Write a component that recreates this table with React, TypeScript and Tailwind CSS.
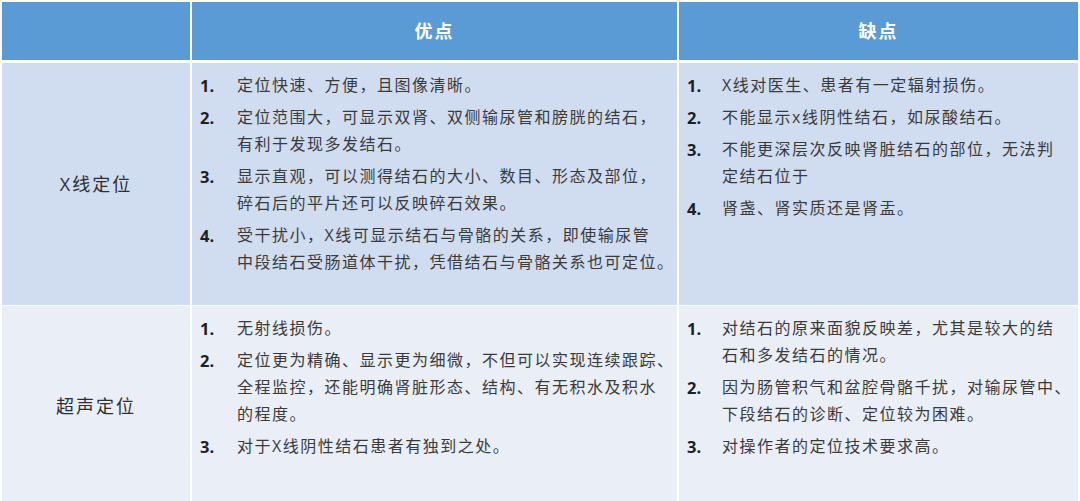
const font = { fontFamily: '"Open Sans", "Noto Sans CJK SC", sans-serif' };

type Row = { label: string; pros: string[][]; cons: string[][]; bg: string; h: string };

// Each item is split into the lines the slide wraps it into.
const rows: Row[] = [
  {
    label: 'X线定位',
    bg: 'bg-[#d0dcef]',
    h: 'h-[242px] mb-[1px]',
    pros: [
      ['定位快速、方便，且图像清晰。'],
      ['定位范围大，可显示双肾、双侧输尿管和膀胱的结石，', '有利于发现多发结石。'],
      ['显示直观，可以测得结石的大小、数目、形态及部位，', '碎石后的平片还可以反映碎石效果。'],
      ['受干扰小，X线可显示结石与骨骼的关系，即使输尿管', '中段结石受肠道体干扰，凭借结石与骨骼关系也可定位。'],
    ],
    cons: [
      ['X线对医生、患者有一定辐射损伤。'],
      ['不能显示x线阴性结石，如尿酸结石。'],
      ['不能更深层次反映肾脏结石的部位，无法判', '定结石位于'],
      ['肾盏、肾实质还是肾盂。'],
    ],
  },
  {
    label: '超声定位',
    bg: 'bg-[#e9eef7]',
    h: 'h-[200px]',
    pros: [
      ['无射线损伤。'],
      ['定位更为精确、显示更为细微，不但可以实现连续跟踪、', '全程监控，还能明确肾脏形态、结构、有无积水及积水', '的程度。'],
      ['对于X线阴性结石患者有独到之处。'],
    ],
    cons: [
      ['对结石的原来面貌反映差，尤其是较大的结', '石和多发结石的情况。'],
      ['因为肠管积气和盆腔骨骼千扰，对输尿管中、', '下段结石的诊断、定位较为困难。'],
      ['对操作者的定位技术要求高。'],
    ],
  },
];

function List({ items, numW }: { items: string[][]; numW: string }) {
  return (
    <ol className="flex flex-col gap-[5px] pt-[9px] pl-[8px]">
      {items.map((lines, i) => (
        <li key={i} className="flex text-[16px] leading-[27px] text-[#3b3b3b]">
          <span className={`${numW} shrink-0 font-bold text-[#1f1f1f] text-[16.5px]`}>{i + 1}.</span>
          <span className="flex-1 tracking-[1.5px]">
            {lines.map((l, j) => (
              <span key={j} className="block whitespace-nowrap">
                {l}
              </span>
            ))}
          </span>
        </li>
      ))}
    </ol>
  );
}

export default function App() {
  return (
    <div className="w-[1080px] h-[501px] bg-white pt-[2px] pl-[2px] pr-[2px] overflow-hidden" style={font}>
      <div className="grid grid-cols-[188px_485px_1fr] gap-x-[2px] h-[58px] mb-[3px]">
        <div className="bg-[#5b9bd5]" />
        <div className="bg-[#5b9bd5] flex items-center justify-center text-white font-bold text-[18px] tracking-[2px]">
          优点
        </div>
        <div className="bg-[#5b9bd5] flex items-center justify-center text-white font-bold text-[18px] tracking-[2px]">
          缺点
        </div>
      </div>
      {rows.map((r) => (
        <div key={r.label} className={`grid grid-cols-[188px_485px_1fr] gap-x-[2px] ${r.h}`}>
          <div className={`${r.bg} flex items-center justify-center text-[18px] text-[#2f2f2f] tracking-[2px]`}>
            {r.label}
          </div>
          <div className={r.bg}>
            <List items={r.pros} numW="w-[37px]" />
          </div>
          <div className={r.bg}>
            <List items={r.cons} numW="w-[35px]" />
          </div>
        </div>
      ))}
    </div>
  );
}
